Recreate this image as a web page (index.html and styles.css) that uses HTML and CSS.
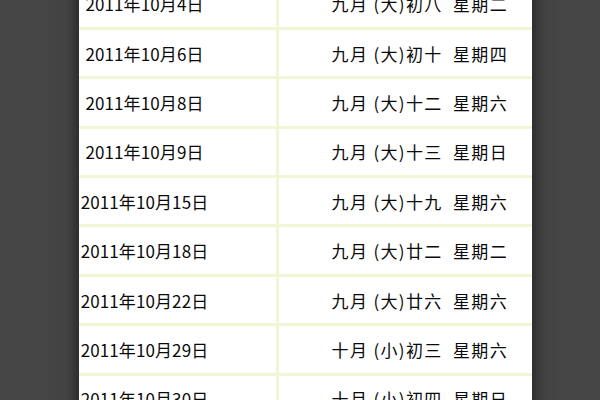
FILE: index.html
```html
<!DOCTYPE html>
<html lang="zh-CN">
<head>
<meta charset="utf-8">
<link rel="stylesheet" href="styles.css">
</head>
<body>
<div class="sheet">
  <div class="row"><div class="date"><span>2011年10月4日</span></div><div class="lunar">九月 (大)初八  星期二</div></div>
  <div class="row"><div class="date"><span>2011年10月6日</span></div><div class="lunar">九月 (大)初十  星期四</div></div>
  <div class="row"><div class="date"><span>2011年10月8日</span></div><div class="lunar">九月 (大)十二  星期六</div></div>
  <div class="row"><div class="date"><span>2011年10月9日</span></div><div class="lunar">九月 (大)十三  星期日</div></div>
  <div class="row"><div class="date"><span>2011年10月15日</span></div><div class="lunar">九月 (大)十九  星期六</div></div>
  <div class="row"><div class="date"><span>2011年10月18日</span></div><div class="lunar">九月 (大)廿二  星期二</div></div>
  <div class="row"><div class="date"><span>2011年10月22日</span></div><div class="lunar">九月 (大)廿六  星期六</div></div>
  <div class="row"><div class="date"><span>2011年10月29日</span></div><div class="lunar">十月 (小)初三  星期六</div></div>
  <div class="row"><div class="date"><span>2011年10月30日</span></div><div class="lunar">十月 (小)初四  星期日</div></div>
</div>
</body>
</html>
```
FILE: styles.css
```css
html, body {
  margin: 0;
  padding: 0;
  height: 100%;
  overflow: hidden;
}
body {
  background: #454545;
  font-family: "Noto Sans CJK SC", "Liberation Sans", sans-serif;
  font-size: 17px;
  color: #0a0a0a;
}
.sheet {
  margin-left: 79px;
  width: 453px;
  margin-top: -19.5px;
  background: #fff;
  box-shadow: 0 0 14px 3px rgba(0, 0, 0, 0.5);
}
.row {
  display: flex;
  height: 49.4px;
  box-sizing: border-box;
  border-bottom: 3px solid #f1f6d6;
}
.date {
  width: 200px;
  flex: none;
  box-sizing: border-box;
  border-right: 3px solid #f1f6d6;
  display: flex;
  align-items: center;
  padding-right: 66px;
  justify-content: center;
  letter-spacing: 0.1px;
  white-space: nowrap;
}
.lunar {
  flex: 1;
  display: flex;
  align-items: center;
  justify-content: flex-end;
  padding-right: 24px;
  white-space: pre;
  letter-spacing: 1.35px;
}
```
